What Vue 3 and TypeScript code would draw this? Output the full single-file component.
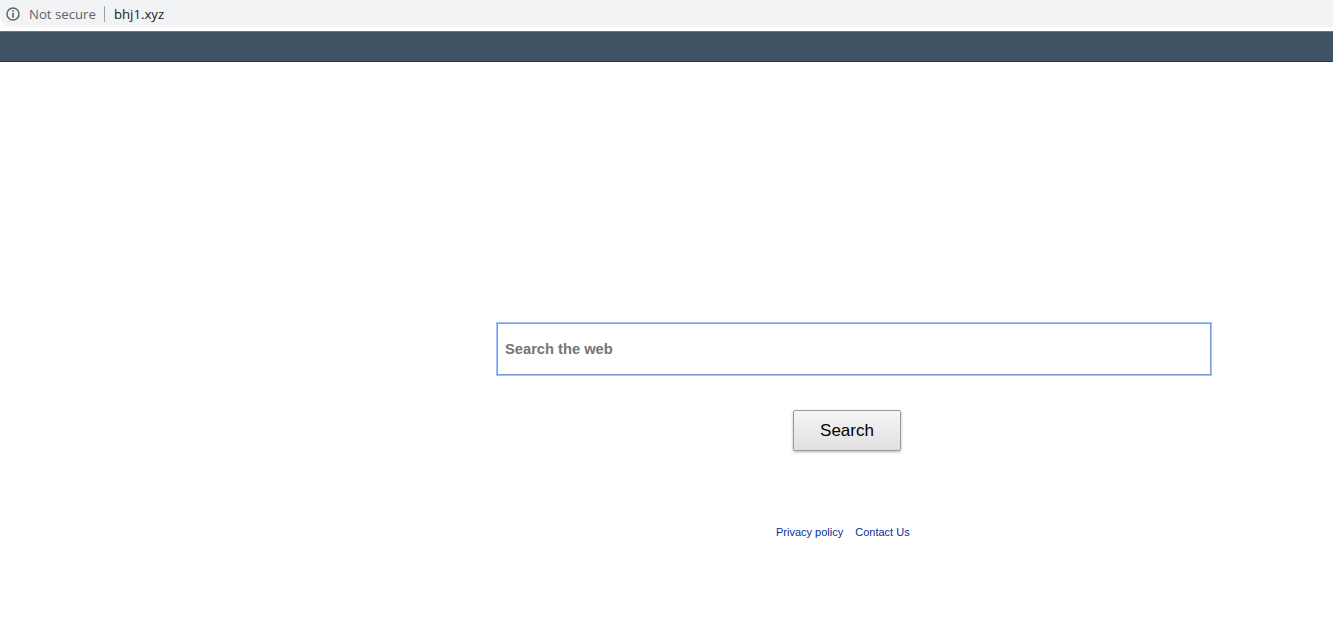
<script setup lang="ts">
const title: string = 'bhj1.xyz'
</script>

<template>
  <div class="page">
    <div class="chrome">
      <svg class="info" width="14" height="14" viewBox="0 0 14 14" fill="none">
        <circle cx="7" cy="7" r="6" stroke="#5f6368" stroke-width="1.5" />
        <rect x="6.2" y="3.3" width="1.6" height="1.6" fill="#5f6368" />
        <rect x="6.2" y="5.9" width="1.6" height="4.8" fill="#5f6368" />
      </svg>
      <span class="secure">Not secure</span>
      <span class="sep"></span>
      <span class="url">{{ title }}</span>
    </div>
    <div class="band"></div>
    <main class="main">
      <div class="search-col">
        <div class="field"><span class="placeholder">Search the web</span></div>
        <div class="btn-row"><button class="btn" type="button">Search</button></div>
        <div class="links">
          <a class="link">Privacy policy</a>
          <a class="link">Contact Us</a>
        </div>
      </div>
    </main>
  </div>
</template>

<style>
html, body { margin: 0; background: #fff; }
</style>

<style scoped>
.page {
  width: 1333px;
  height: 628px;
  overflow: hidden;
  background: #fff;
  font-family: "Liberation Sans", Arial, sans-serif;
}
.chrome {
  height: 27px;
  background: #f1f3f4;
  border-bottom-left-radius: 12px;
  display: flex;
  align-items: center;
  padding-left: 6px;
  font-family: "Open Sans", "Noto Sans", sans-serif;
  font-size: 13.2px;
  box-sizing: border-box;
}
.secure { color: #5f6368; margin-left: 9px; }
.sep { width: 1px; height: 16px; background: #9aa0a6; margin-left: 8px; }
.url { color: #202124; margin-left: 9px; }
.band {
  margin-top: 4px;
  height: 31px;
  box-sizing: border-box;
  background: #3f5364;
  border-top: 1px solid #6c7780;
  border-bottom: 1px solid #26343f;
}
.main { padding: 260px 0 0 496px; }
.search-col { width: 716px; }
.field {
  height: 54px;
  box-sizing: border-box;
  border: 1px solid #a3c1fb;
  box-shadow: inset 0 0 0 1px #7b9bd8;
  display: flex;
  align-items: center;
  padding-left: 8px;
}
.placeholder { font-size: 14.7px; font-weight: 700; color: #757575; }
.btn-row { margin-top: 34px; padding-left: 297px; }
.btn {
  display: block;
  width: 108px;
  height: 41px;
  padding: 0;
  border: 1px solid #9a9a9a;
  border-radius: 2px;
  background: linear-gradient(#f5f5f5, #e0e0e0);
  box-shadow: 0 1px 3px rgba(0, 0, 0, 0.3);
  font-family: "Liberation Sans", Arial, sans-serif;
  font-size: 17px;
  color: #000;
}
.links {
  margin-top: 75px;
  padding-left: 280px;
  display: flex;
  gap: 12px;
  line-height: 12px;
}
.link { color: #0a2f96; font-size: 11px; }
</style>
